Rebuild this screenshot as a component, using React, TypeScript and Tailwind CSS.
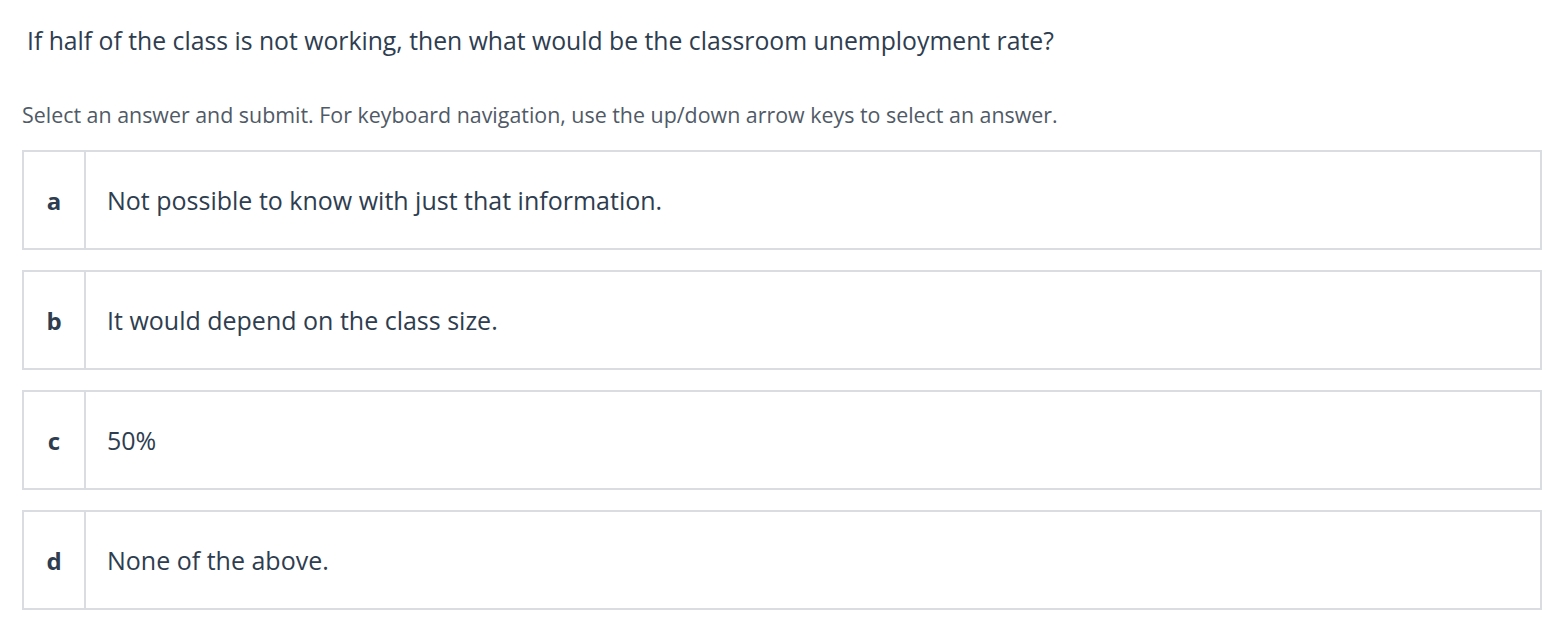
const options = [
  { key: "a", text: "Not possible to know with just that information." },
  { key: "b", text: "It would depend on the class size." },
  { key: "c", text: "50%" },
  { key: "d", text: "None of the above." },
];

export default function App() {
  return (
    <div className="min-h-[620px] bg-white px-[22px] pt-[26px] font-['Open_Sans','Liberation_Sans',sans-serif]">
      <h2 className="pl-[5px] text-[24.75px] leading-[30px] font-normal text-[#2e3d4f]">
        If half of the class is not working, then what would be the classroom unemployment rate?
      </h2>
      <p className="mt-[46px] text-[21.4px] leading-[26px] text-[#505a66]">
        Select an answer and submit. For keyboard navigation, use the up/down arrow keys to select an answer.
      </p>
      <ul className="mt-[22px] flex flex-col gap-[20px]">
        {options.map((o) => (
          <li
            key={o.key}
            className="flex h-[100px] items-stretch border-2 border-[#d9dde1] bg-white text-[#2e3d4f]"
          >
            <div className="flex w-[62px] items-center justify-center border-r-2 border-[#d9dde1] pt-px text-[24px] font-bold">
              {o.key}
            </div>
            <div className="flex items-center pt-px pl-[21px] text-[25px]">{o.text}</div>
          </li>
        ))}
      </ul>
    </div>
  );
}
